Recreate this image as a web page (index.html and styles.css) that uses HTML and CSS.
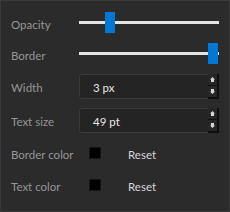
FILE: index.html
```html
<!DOCTYPE html>
<html>
<head>
<meta charset="utf-8">
<link rel="stylesheet" href="styles.css">
</head>
<body>
<div class="panel">
  <div class="row row-slider">
    <span class="label">Opacity</span>
    <div class="slider"><div class="track"></div><div class="thumb" style="left:26px"></div></div>
  </div>
  <div class="row row-slider">
    <span class="label">Border</span>
    <div class="slider"><div class="track"></div><div class="thumb" style="left:129px"></div></div>
  </div>
  <div class="row row-spin">
    <span class="label">Width</span>
    <div class="spin">
      <span class="value">3 px</span>
      <div class="spin-btns">
        <div class="btn"><svg width="5" height="5" viewBox="0 0 5 5"><path d="M2.5 0 L5 2.5 H4 V5 H1 V2.5 H0 Z" fill="#d6d6d6"/></svg></div>
        <div class="btn"><svg width="5" height="5" viewBox="0 0 5 5"><path d="M2.5 5 L5 2.5 H4 V0 H1 V2.5 H0 Z" fill="#d6d6d6"/></svg></div>
      </div>
    </div>
  </div>
  <div class="row row-spin">
    <span class="label">Text size</span>
    <div class="spin">
      <span class="value">49 pt</span>
      <div class="spin-btns">
        <div class="btn"><svg width="5" height="5" viewBox="0 0 5 5"><path d="M2.5 0 L5 2.5 H4 V5 H1 V2.5 H0 Z" fill="#d6d6d6"/></svg></div>
        <div class="btn"><svg width="5" height="5" viewBox="0 0 5 5"><path d="M2.5 5 L5 2.5 H4 V0 H1 V2.5 H0 Z" fill="#d6d6d6"/></svg></div>
      </div>
    </div>
  </div>
  <div class="row row-color">
    <span class="label">Border color</span>
    <div class="color-ctl"><span class="swatch"></span><span class="reset">Reset</span></div>
  </div>
  <div class="row row-color">
    <span class="label">Text color</span>
    <div class="color-ctl"><span class="swatch"></span><span class="reset">Reset</span></div>
  </div>
</div>
</body>
</html>
```
FILE: styles.css
```css
body {
  margin: 0;
  background: #2b2b2b;
}
.panel {
  width: 230px;
  height: 212px;
  box-sizing: border-box;
  border: 1px solid #3a3a3a;
  background: #2b2b2b;
  padding: 6px 10px 0 10px;
  font-family: Lato, "Open Sans", sans-serif;
  font-size: 11.5px;
}
.row {
  display: grid;
  grid-template-columns: 68px 140px;
  align-items: center;
}
.row-slider { height: 31px; }
.row-spin { height: 34px; }
.row-color { height: 32px; }
.label {
  color: #969696;
  padding-top: 2px;
}
.row-slider .label {
  padding-top: 4px;
}
.slider {
  position: relative;
  height: 21px;
}
.track {
  position: absolute;
  left: 0;
  right: 0;
  top: 9px;
  height: 3px;
  background: #e4e4e4;
}
.thumb {
  position: absolute;
  top: 0;
  width: 10px;
  height: 21px;
  background: #0078d7;
}
.spin {
  display: flex;
  align-items: center;
  height: 25px;
  box-sizing: border-box;
  border: 1px solid #3a3a3a;
  border-radius: 3px;
  background: #242424;
}
.value {
  flex: 1;
  padding-left: 13px;
  padding-top: 2px;
  color: #e6e6e6;
}
.spin-btns {
  display: flex;
  flex-direction: column;
  width: 11px;
  height: 25px;
  margin: -1px -1px -1px 0;
  box-sizing: border-box;
  border-right: 2px solid #0e0e0e;
  border-bottom: 2px solid #0e0e0e;
  background: #262626;
}
.btn {
  flex: 1;
  display: flex;
  align-items: center;
  justify-content: center;
}
.btn + .btn {
  border-top: 1px solid #111111;
}
.btn svg { display: block; }
.color-ctl {
  display: flex;
  align-items: center;
  gap: 27px;
  padding-left: 10px;
}
.swatch {
  width: 12px;
  height: 12px;
  box-sizing: border-box;
  background: #000000;
  border: 1px solid #161616;
}
.reset {
  color: #d6d6d6;
  padding-top: 2px;
}
```
